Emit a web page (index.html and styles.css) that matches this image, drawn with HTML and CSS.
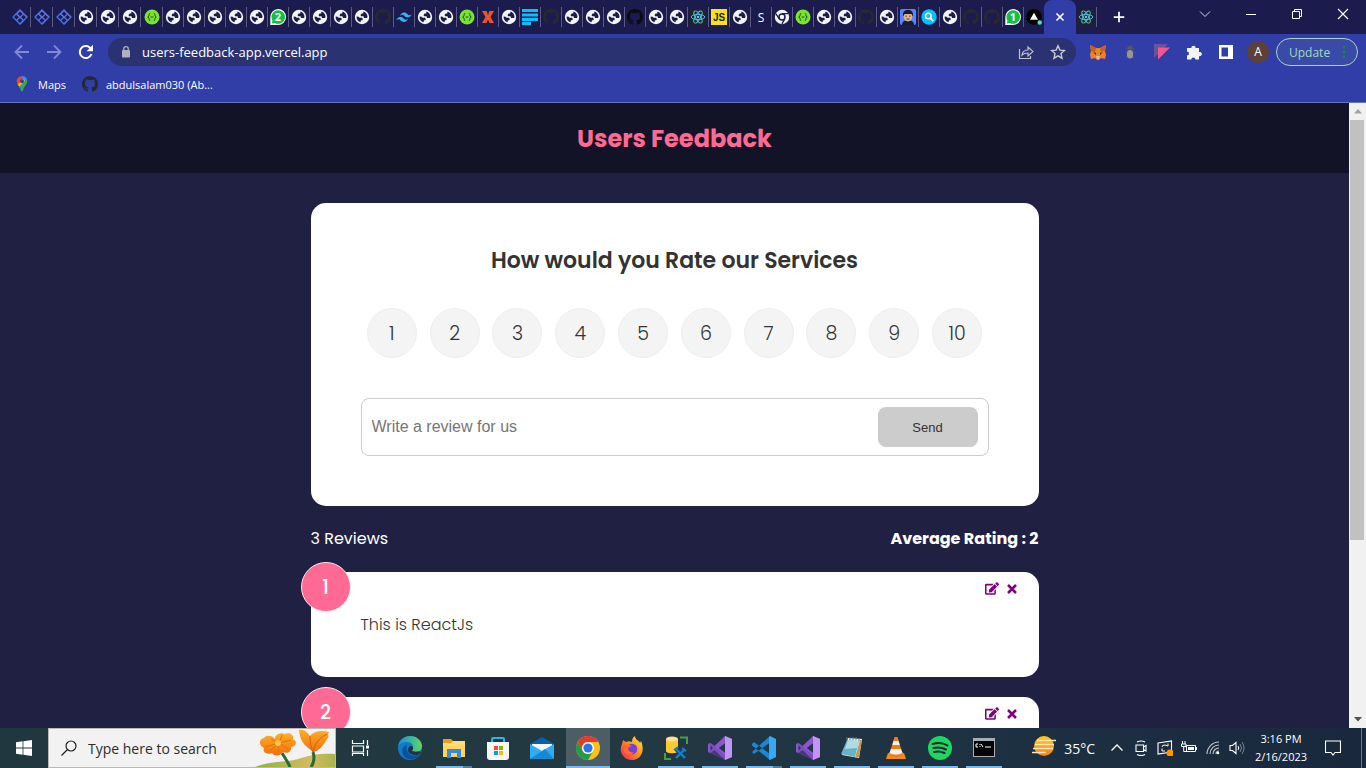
FILE: index.html
```html
<!DOCTYPE html>
<html lang="en">
<head>
<meta charset="utf-8">
<title>Users Feedback</title>
<link rel="stylesheet" href="styles.css">
</head>
<body>
<svg class="defs" aria-hidden="true">
  <symbol id="globe" viewBox="0 0 16 16"><circle cx="8" cy="8" r="7.200" fill="#f4f5f8"/><path d="M9.500 2.500c2.300.6 4 2.700 4 5.200l-.4 1.300H10L9.500 7.300H7.200L6.500 6l1.200-1.500h1.500zM2.600 7.500l2 .2 1 1h2.300l1 1.300-.6 1.300H7l-.5 2C4 12.600 2.300 10.200 2.600 7.500z" fill="#1b1b4e"/></symbol>
  <symbol id="diamond" viewBox="0 0 16 16"><g fill="none" stroke="#3f7ae8" stroke-width="1.300"><path d="M8 1l7 7-7 7-7-7z"/><path d="M4.500 4.500l7 7M8 1.500L4.500 5 8 8.500l3.500-3.500zM8 8l-3.500 3.500M11.500 5L15 8M8 15l3.500-3.500L8 8" stroke="#5b6fdc"/></g></symbol>
  <symbol id="green" viewBox="0 0 16 16"><circle cx="8" cy="8" r="7.500" fill="#7be52c"/><path d="M6.300 4.300c-1.600 0-1 1.700-1.300 2.700L3.700 8 5 9c.3 1-.3 2.700 1.300 2.700M9.700 4.300c1.600 0 1 1.700 1.300 2.700l1.300 1L11 9c-.3 1 .3 2.700-1.300 2.700M6.500 8h3" fill="none" stroke="#21502a"/></symbol>
  <symbol id="github" viewBox="0 0 16 16"><path d="M8 0C3.580 0 0 3.580 0 8c0 3.540 2.290 6.530 5.470 7.590.4.070.55-.17.55-.38 0-.19-.01-.82-.01-1.490-2.010.37-2.530-.49-2.690-.94-.09-.23-.48-.94-.82-1.130-.28-.15-.68-.52-.01-.53.63-.01 1.080.58 1.230.82.72 1.210 1.870.87 2.330.66.07-.52.28-.87.51-1.070-1.780-.2-3.640-.89-3.640-3.950 0-.87.31-1.590.82-2.150-.08-.2-.36-1.020.08-2.120 0 0 .67-.21 2.200.82a7.600 7.600 0 014 0c1.530-1.040 2.200-.82 2.200-.82.44 1.100.16 1.920.08 2.120.51.56.82 1.270.82 2.150 0 3.070-1.870 3.750-3.650 3.950.29.25.54.73.54 1.480 0 1.070-.01 1.930-.01 2.200 0 .21.15.46.55.38A8 8 0 0016 8c0-4.420-3.580-8-8-8z" fill="currentColor"/></symbol>
  <symbol id="react" viewBox="0 0 16 16"><path fill="#20232a" d="M0 0h16v16H0z"/><g fill="none" stroke="#55c8e8" stroke-width=".9"><ellipse cx="8" cy="8" rx="6.800" ry="2.600"/><ellipse cx="8" cy="8" rx="6.800" ry="2.600" transform="rotate(60 8 8)"/><ellipse cx="8" cy="8" rx="6.800" ry="2.600" transform="rotate(120 8 8)"/></g><circle cx="8" cy="8" r="1.300" fill="#55c8e8"/></symbol>
  <symbol id="tailwind" viewBox="0 0 16 16"><path d="M4 7c.6-2.300 2-3.500 4-3.500 3 0 3.400 2.300 5 2.700 1 .2 1.900-.2 2.700-1.200-.6 2.300-2 3.500-4 3.500-3 0-3.400-2.300-5-2.700C5.700 5.600 4.800 6 4 7zM.3 11.500C.9 9.200 2.300 8 4.300 8c3 0 3.400 2.300 5 2.700 1 .2 1.900-.2 2.700-1.200-.6 2.300-2 3.500-4 3.500-3 0-3.400-2.300-5-2.700-1-.2-1.900.2-2.700 1.200z" fill="#35b4f0"/></symbol>
  <symbol id="xicon" viewBox="0 0 16 16"><path d="M2 2h4.500L8 6l1.500-4H14l-3.500 6 3.500 6H9.500L8 10.500 6.500 14H2l3.500-6z" fill="#f05423"/></symbol>
  <symbol id="bars" viewBox="0 0 16 16"><path d="M0 0h16v3H0zM0 4.500h16v3H0zM0 9h16v3H0zM0 13h9v3H0z" fill="#08bffa"/></symbol>
  <symbol id="chat" viewBox="0 0 16 16"><path d="M8 0a8 8 0 110 16H.3V8A8 8 0 018 0z" fill="#fff"/><path d="M8 1.200a6.800 6.800 0 11-3.200 12.700l-3 .5.700-2.800A6.800 6.800 0 018 1.200z" fill="#12c143"/></symbol>
  <symbol id="chromemono" viewBox="0 0 16 16"><circle cx="8" cy="8" r="7.200" fill="#f4f5f8"/><circle cx="8" cy="8" r="3" fill="none" stroke="#1b1b4e" stroke-width="1.500"/><path d="M8 4.700h6M5.100 9.700L2 4.800M10.800 9.800l-2.900 5" stroke="#1b1b4e" stroke-width="1.300"/></symbol>
  <symbol id="person" viewBox="0 0 16 16"><rect width="16" height="16" rx="2" fill="#5686ff"/><path d="M2 16c0-4 3-4.500 6-4.500s6 .5 6 4.500z" fill="#141d35"/><ellipse cx="8" cy="7.500" rx="4.300" ry="5" fill="#e7b08a"/><path d="M3.300 7.500C2 2.500 5 1 8 1s6 1.500 4.700 6.500L11.500 5h-7z" fill="#181b28"/><path d="M5.500 7.200h1.400M9.200 7.200h1.400M6.500 10h3" stroke="#222" stroke-width=".8"/></symbol>
  <symbol id="magnify" viewBox="0 0 16 16"><circle cx="8" cy="8" r="7.700" fill="#08bffa"/><circle cx="7.300" cy="7" r="2.800" fill="none" stroke="#fff" stroke-width="1.500"/><path d="M9.300 9.200l3 3" stroke="#fff" stroke-width="1.700"/></symbol>
  <symbol id="vercel" viewBox="0 0 16 16"><circle cx="8" cy="8" r="7.800" fill="#000"/><path d="M8 3.800l4 7H4z" fill="#fff"/><circle cx="13.700" cy="13.500" r="2.200" fill="#50e3c2"/></symbol>
  <symbol id="edit" viewBox="0 0 576 512"><path fill="currentColor" d="M402.600 83.200l90.200 90.200c3.800 3.800 3.800 10 0 13.800L274.400 405.600l-92.800 10.300c-12.400 1.400-22.900-9.100-21.500-21.500l10.300-92.800L388.800 83.200c3.800-3.800 10-3.800 13.800 0zm162-22.900l-48.800-48.800c-15.200-15.200-39.900-15.200-55.200 0l-35.400 35.400c-3.800 3.800-3.800 10 0 13.800l90.200 90.200c3.800 3.800 10 3.800 13.800 0l35.400-35.400c15.200-15.300 15.200-40 0-55.200zM384 346.200V448H64V128h229.800c3.200 0 6.200-1.300 8.500-3.500l40-40c7.600-7.600 2.200-20.500-8.500-20.500H48C21.500 64 0 85.500 0 112v352c0 26.500 21.500 48 48 48h352c26.500 0 48-21.500 48-48V306.200c0-10.700-12.900-16-20.500-8.500l-40 40c-2.200 2.300-3.500 5.300-3.500 8.500z"/></symbol>
  <symbol id="times" viewBox="0 0 10 10"><path d="M1 1l8 8M9 1L1 9" stroke="currentColor" stroke-width="2.500" fill="none"/></symbol>
  <symbol id="vs" viewBox="0 0 24 24"><path d="M17 0l7 3v18l-7 3L6.500 14 2.500 17 0 16V8l2.500-1 4 3zM17 7.200L10.800 12l6.200 4.800zM2.500 9.300v5.400L5 12z" fill="#8a57cf" fill-rule="evenodd"/><path d="M0 8l2.500-1L17 19v5L2.500 17.500 0 16l5-4z" fill="#7643b5" opacity=".45"/><path d="M17 0l7 3v18l-7 3z" fill="#c294f6"/></symbol>
</svg>

<div class="desktop">
  <div class="browser">
    <div class="tabstrip">
      <nav class="tabs" aria-label="Open tabs">
        <button class="tab wide"><svg><use href="#diamond"/></svg></button>
        <button class="tab wide"><svg><use href="#diamond"/></svg></button>
        <button class="tab wide"><svg><use href="#diamond"/></svg></button>
        <button class="tab wide"><svg><use href="#globe"/></svg></button>
        <button class="tab wide"><svg><use href="#globe"/></svg></button>
        <button class="tab wide"><svg><use href="#globe"/></svg></button>
        <button class="tab wide"><svg><use href="#green"/></svg></button>
        <button class="tab"><svg><use href="#globe"/></svg></button>
        <button class="tab"><svg><use href="#globe"/></svg></button>
        <button class="tab"><svg><use href="#globe"/></svg></button>
        <button class="tab"><svg><use href="#globe"/></svg></button>
        <button class="tab"><svg><use href="#globe"/></svg></button>
        <button class="tab"><svg><use href="#chat"/></svg><span class="count">2</span></button>
        <button class="tab"><svg><use href="#globe"/></svg></button>
        <button class="tab"><svg><use href="#globe"/></svg></button>
        <button class="tab"><svg><use href="#globe"/></svg></button>
        <button class="tab"><svg><use href="#globe"/></svg></button>
        <button class="tab"><svg><use href="#github"/></svg></button>
        <button class="tab"><svg><use href="#tailwind"/></svg></button>
        <button class="tab"><svg><use href="#globe"/></svg></button>
        <button class="tab"><svg><use href="#globe"/></svg></button>
        <button class="tab"><svg><use href="#green"/></svg></button>
        <button class="tab"><svg><use href="#xicon"/></svg></button>
        <button class="tab"><svg><use href="#globe"/></svg></button>
        <button class="tab"><svg><use href="#bars"/></svg></button>
        <button class="tab"><svg><use href="#github"/></svg></button>
        <button class="tab"><svg><use href="#globe"/></svg></button>
        <button class="tab"><svg><use href="#globe"/></svg></button>
        <button class="tab"><svg><use href="#globe"/></svg></button>
        <button class="tab black"><svg><use href="#github"/></svg></button>
        <button class="tab"><svg><use href="#globe"/></svg></button>
        <button class="tab"><svg><use href="#globe"/></svg></button>
        <button class="tab"><svg><use href="#react"/></svg></button>
        <button class="tab"><span class="js">JS</span></button>
        <button class="tab"><svg><use href="#globe"/></svg></button>
        <button class="tab"><span class="letter">S</span></button>
        <button class="tab"><svg><use href="#chromemono"/></svg></button>
        <button class="tab"><svg><use href="#green"/></svg></button>
        <button class="tab"><svg><use href="#globe"/></svg></button>
        <button class="tab"><svg><use href="#globe"/></svg></button>
        <button class="tab"><svg><use href="#github"/></svg></button>
        <button class="tab"><svg><use href="#globe"/></svg></button>
        <button class="tab"><svg><use href="#person"/></svg></button>
        <button class="tab"><svg><use href="#magnify"/></svg></button>
        <button class="tab"><svg><use href="#globe"/></svg></button>
        <button class="tab"><svg><use href="#github"/></svg></button>
        <button class="tab"><svg><use href="#github"/></svg></button>
        <button class="tab"><svg><use href="#chat"/></svg><span class="count">1</span></button>
        <button class="tab last"><svg><use href="#vercel"/></svg></button>
        <button class="tab active" aria-label="Close tab"><svg viewBox="0 0 16 16"><path d="M4.500 4.500l7 7M11.500 4.500l-7 7" stroke="#fff" stroke-width="1.700"/></svg></button>
        <button class="tab"><svg><use href="#react"/></svg></button>
        <button class="newtab" aria-label="New tab"><svg viewBox="0 0 16 16"><path d="M8 2v12M2 8h12" stroke="#fff" stroke-width="2"/></svg></button>
      </nav>
      <div class="window-controls">
        <button aria-label="Search tabs"><svg viewBox="0 0 12 12"><path d="M1 3.500l5 5 5-5" fill="none" stroke="#d8d8ea"/></svg></button>
        <button aria-label="Minimize"><svg viewBox="0 0 12 12"><path d="M1 6.500h10" stroke="#fff"/></svg></button>
        <button aria-label="Restore"><svg viewBox="0 0 12 12"><path d="M1.500 3.500h7v7h-7zM3.500 3.500v-2h7v7h-2" fill="none" stroke="#fff"/></svg></button>
        <button aria-label="Close"><svg viewBox="0 0 12 12"><path d="M1 1l10 10M11 1L1 11" stroke="#fff" stroke-width="1.200"/></svg></button>
      </div>
    </div>

    <div class="toolbar">
      <button class="tool" aria-label="Back"><svg viewBox="0 0 16 16"><path d="M15 8H2M8 1.500L1.500 8 8 14.500" fill="none" stroke="#8389d3" stroke-width="1.800"/></svg></button>
      <button class="tool" aria-label="Forward"><svg viewBox="0 0 16 16"><path d="M1 8h13M8 1.500L14.500 8 8 14.500" fill="none" stroke="#8389d3" stroke-width="1.800"/></svg></button>
      <button class="tool" aria-label="Reload"><svg viewBox="0 0 16 16"><path d="M13.500 10A6 6 0 1112 3.700l1.500 1.500" fill="none" stroke="#fff" stroke-width="2"/><path d="M15 .8v6.400H8.600z" fill="#fff"/></svg></button>
      <div class="omnibox">
        <svg class="lock" viewBox="0 0 12 14"><rect x="2" y="5" width="8" height="7.500" rx="1" fill="#aeb1bd"/><path d="M3.700 5.500V4a2.300 2.300 0 014.600 0v1.500" fill="none" stroke="#aeb1bd" stroke-width="1.300"/></svg>
        <input type="text" aria-label="Address" value="users-feedback-app.vercel.app">
        <button class="tool" aria-label="Share"><svg viewBox="0 0 16 16"><path d="M1.500 5v9.500h11V12" fill="none" stroke="#c0c1cb" stroke-width="1.200"/><path d="M4 11c.5-3.500 2.500-5 6-5V3l5 4.500-5 4.500V9c-3 0-4.500.5-6 2z" fill="none" stroke="#c0c1cb" stroke-width="1.200"/></svg></button>
        <button class="tool" aria-label="Bookmark"><svg viewBox="0 0 16 16"><path d="M8 1.800l1.900 4.300 4.600.4L11 9.600l1 4.600-4-2.400-4 2.400 1-4.600-3.500-3.100 4.600-.4z" fill="none" stroke="#c8c9d6" stroke-width="1.400"/></svg></button>
      </div>
      <button class="tool" aria-label="MetaMask"><svg viewBox="0 0 16 16"><path d="M0 1l6 3h4l6-3-1 6 1 4-1 4-4-1-2 2H7l-2-2-4 1-1-4 1-4z" fill="#f08220"/><path d="M0 1l6 3-1 4-4-1zM16 1l-6 3 1 4 4-1z" fill="#c9601f"/><path d="M3 8l3 1v2zM13 8l-3 1v2z" fill="#24334a"/><path d="M6 12h4l-1 3H7z" fill="#d6c0b3"/></svg></button>
      <button class="tool" aria-label="Debugger"><svg viewBox="0 0 16 16"><path d="M3.500 4l2 2M12.500 4l-2 2M2.500 9h3M13.500 9h-3M3.500 14l2-2M12.500 14l-2-2" stroke="#4a4d73" stroke-width="1.300"/><path d="M5 5.500a3 4 0 016 0z" fill="#55585e"/><rect x="5" y="6" width="6" height="8.500" rx="3" fill="#969696"/></svg></button>
      <button class="tool" aria-label="Extension"><svg viewBox="0 0 16 16"><path d="M0 0h14L0 14z" fill="#69529e"/><path d="M4 3.500h12L4 15.500z" fill="#f4588a"/></svg></button>
      <button class="tool" aria-label="Extensions"><svg viewBox="0 0 16 16"><path d="M1 4h4.300a2.200 2.200 0 114.400 0H13v4a2.200 2.200 0 110 4.200V15.500H9.300a2 2 0 10-4 0H1v-4a2 2 0 100-4z" fill="#f2f3fb"/></svg></button>
      <button class="tool" aria-label="Side panel"><svg viewBox="0 0 16 16"><path d="M1 1h14v14H1zM3.500 3.500v9H10v-9z" fill="#fff" fill-rule="evenodd"/></svg></button>
      <button class="tool" aria-label="Profile"><span class="profile">A</span></button>
      <button class="update">Update<svg viewBox="0 0 4 16"><path d="M2 1a1.500 1.500 0 110 3 1.500 1.500 0 010-3zM2 6.500a1.500 1.500 0 110 3 1.500 1.500 0 010-3zM2 12a1.500 1.500 0 110 3 1.500 1.500 0 010-3z" fill="#1d8a38"/></svg></button>
    </div>

    <nav class="bookmarks" aria-label="Bookmarks">
      <a href="#maps"><svg viewBox="0 0 16 16"><path d="M8 0a5.500 5.500 0 00-4.200 2l3 3z" fill="#ea4335"/><path d="M8 0a5.500 5.500 0 015 3.300L9.500 7 6.500 4.500z" fill="#4285f4"/><path d="M3.800 2C2 4.500 2.500 7 4 9l5-5.500-2.200-2z" fill="#ea4335"/><path d="M3.700 8.600L9.900 3c2 2 0 3.500-1 4.500L5.500 11z" fill="#fbbc04"/><path d="M13 3.300c1.500 4.500-3 6.700-3.800 10.700-.5 2-1.900 2-2.400 0-.3-1-.8-2-1.600-3z" fill="#34a853"/><circle cx="8" cy="5.300" r="2" fill="#3140a8"/></svg>Maps</a>
      <a href="#github"><svg><use href="#github"/></svg>abdulsalam030 (Ab...</a>
    </nav>

    <div class="viewport">
      <div class="page">
        <header class="site-header"><h1>Users Feedback</h1></header>
        <main class="container">
          <form class="card">
            <h2>How would you Rate our Services</h2>
            <div class="rating">
              <label><input type="radio" name="rating" value="1"><span>1</span></label>
              <label><input type="radio" name="rating" value="2"><span>2</span></label>
              <label><input type="radio" name="rating" value="3"><span>3</span></label>
              <label><input type="radio" name="rating" value="4"><span>4</span></label>
              <label><input type="radio" name="rating" value="5"><span>5</span></label>
              <label><input type="radio" name="rating" value="6"><span>6</span></label>
              <label><input type="radio" name="rating" value="7"><span>7</span></label>
              <label><input type="radio" name="rating" value="8"><span>8</span></label>
              <label><input type="radio" name="rating" value="9"><span>9</span></label>
              <label><input type="radio" name="rating" value="10"><span>10</span></label>
            </div>
            <div class="input-group">
              <input type="text" placeholder="Write a review for us" aria-label="Write a review for us">
              <button class="send" type="button">Send</button>
            </div>
          </form>
          <div class="stats"><p>3 Reviews</p><p class="average">Average Rating : 2</p></div>
          <article class="card review">
            <div class="score">1</div>
            <div class="actions">
              <button aria-label="Edit review"><svg class="edit"><use href="#edit"/></svg></button>
              <button aria-label="Delete review"><svg class="times"><use href="#times"/></svg></button>
            </div>
            <p>This is ReactJs</p>
          </article>
          <article class="card review">
            <div class="score">2</div>
            <div class="actions">
              <button aria-label="Edit review"><svg class="edit"><use href="#edit"/></svg></button>
              <button aria-label="Delete review"><svg class="times"><use href="#times"/></svg></button>
            </div>
            <p>&nbsp;</p>
          </article>
        </main>
      </div>
      <div class="scrollbar">
        <button aria-label="Scroll up"><svg viewBox="0 0 8 5"><path d="M4 0l4 4.500H0z" fill="#a3a3a3"/></svg></button>
        <div class="track"><div class="thumb"></div></div>
        <button aria-label="Scroll down"><svg viewBox="0 0 8 5"><path d="M0 0h8L4 4.500z" fill="#505050"/></svg></button>
      </div>
    </div>
  </div>

  <footer class="taskbar">
    <button class="start" aria-label="Start"><svg viewBox="0 0 16 16"><path d="M0 2.200L6.600 1.300v6.200H0zM7.400 1.200L16 0v7.500H7.400zM0 8.400h6.600v6.300L0 13.800zM7.400 8.400H16V16l-8.600-1.200z" fill="#fff"/></svg></button>
    <div class="search">
      <svg class="glass" viewBox="0 0 16 16"><circle cx="10" cy="6" r="5" fill="none" stroke="#222" stroke-width="1.200"/><path d="M6.500 9.500L.5 15.500" stroke="#222" stroke-width="1.300"/></svg>
      <input type="text" placeholder="Type here to search" aria-label="Type here to search">
      <svg class="flowers" viewBox="0 0 80 38">
        <defs><linearGradient id="hill" x2="1"><stop stop-color="#8caf48"/><stop offset=".7" stop-color="#d4bb60"/><stop offset="1" stop-color="#a8b44e"/></linearGradient><linearGradient id="petal" y2="1" x2="0"><stop stop-color="#ffae24"/><stop offset="1" stop-color="#ef7010"/></linearGradient></defs>
        <path d="M0 38c18-7 34-4 46-9 12-4 22-5 34-4v13z" fill="url(#hill)"/>
        <path d="M27 24c3 5 6 9 8 14M58 23c2 6 0 12-2 15" fill="none" stroke="#286a35" stroke-width="3"/>
        <path d="M20 10c0-5 6-7 10-5 5-2 9 1 8 5 5 2 3 8-2 8 1 5-4 7-8 5-3 5-10 4-11 1-5 2-10-1-8-5-6-3-5-9 0-10 2-3 8-3 11 1z" fill="url(#petal)"/>
        <path d="M10 18l14-4 12-3M14 23l10-9 9 6M24 14l-8-4M24 14l3-8M24 14l-1 9" fill="none" stroke="#e37207"/><circle cx="23" cy="14" r="3" fill="#ffc647"/>
        <path d="M44 1c5-1 8 2 11 6 4-5 11-6 19-4-2 3 1 5-2 7-3 6-8 12-14 13-5-5-13-8-14-22z" fill="url(#petal)"/><path d="M55 7c0 6 1 12 3 16 1-7 5-13 14-18" fill="none" stroke="#d86208"/>
      </svg>
    </div>
    <div class="apps">
      <button class="app taskview" aria-label="Task view"><svg viewBox="0 0 24 24"><path d="M4.500 4v3.500h11V4M4.500 10h11v6h-11zM4.500 20v-2.500h11V20M19.500 4v5M19.500 14v6" fill="none" stroke="#fff" stroke-width="1.200"/><path d="M18 9.500h3v3h-3z" fill="#fff"/></svg></button>
      <button class="app" aria-label="Edge"><svg viewBox="0 0 24 24"><defs><linearGradient id="edge-a"><stop stop-color="#158fe0"/><stop offset="1" stop-color="#61d75b"/></linearGradient></defs><circle cx="12" cy="12" r="12" fill="#1179ca"/><path d="M0 11C1 4 6 0 12 0c7 0 12 5 12 10 0 5-5 7-10 5 3-5 0-9-5-9-4 0-8 2-9 5z" fill="url(#edge-a)"/><path d="M9 9c-2 8 4 13 13 9-5 8-14 6-17 1-2-5 0-9 4-10z" fill="#0b51a0"/><path d="M14 15c1-2 2-3 0-5-4-1-6 6-1 8 4 2 8 1 10-1 0-3-5 0-9-2z" fill="#23343e"/></svg></button>
      <button class="app open more" aria-label="File Explorer"><svg viewBox="0 0 24 24"><path d="M1 3h8l2 2h12v5H1z" fill="#e0a315"/><path d="M1 7h22v14H1z" fill="#ffd35c"/><path d="M11 5h12v5H1V7h8z" fill="#ffdc7b"/><path d="M5 13h14v9h-4v-5H9v5H5z" fill="#318de0"/></svg></button>
      <button class="app" aria-label="Store"><svg viewBox="0 0 24 24"><path d="M6 7V3q0-1 1-1h10q1 0 1 1v4" fill="none" stroke="#2bb5e9" stroke-width="2"/><path d="M1 6h22v15q0 3-3 3H4q-3 0-3-3z" fill="#f6f6f6"/><path d="M8 10h4v4H8z" fill="#ef4f22"/><path d="M13 10h4v4h-4z" fill="#7fb900"/><path d="M8 15h4v4H8z" fill="#059fe8"/><path d="M13 15h4v4h-4z" fill="#ffb901"/></svg></button>
      <button class="app" aria-label="Mail"><svg viewBox="0 0 24 24"><path d="M0 8l12-7 12 7v8H0z" fill="#0860ac"/><path d="M2 8h20v10H2z" fill="#f4f4f4"/><path d="M0 8l12 7 12-7v15H0z" fill="#30adf0"/><path d="M0 23l15-10 9 10z" fill="#1588d8"/></svg></button>
      <button class="app open current" aria-label="Chrome"><svg viewBox="0 0 24 24"><circle cx="12" cy="12" r="12" fill="#fbc116"/><path d="M1.600 6A12 12 0 0122.400 6H12a6 6 0 00-5.200 9z" fill="#e33b2e"/><path d="M1.600 6A12 12 0 0012 24l5.200-9a6 6 0 01-10.400 0z" fill="#259b48"/><circle cx="12" cy="12" r="6" fill="#fff"/><circle cx="12" cy="12" r="4.600" fill="#2876e8"/></svg></button>
      <button class="app" aria-label="Firefox"><svg viewBox="0 0 24 24"><defs><linearGradient id="fox" x1="1" y2="1" x2="0"><stop stop-color="#fff33d"/><stop offset=".45" stop-color="#ff9122"/><stop offset="1" stop-color="#f1205a"/></linearGradient></defs><path d="M3 4l3 2c2-1 4-1 6 0 0-3 1-5 3-6 0 4 4 4 5 7l1-2c5 12-2 19-9 19C4 24-2 16 2 8z" fill="url(#fox)"/><circle cx="12" cy="13" r="5.300" fill="#7142dc"/><path d="M4 8c4 0 6 1 8 2-2 1-4 1-4 3 1 3 4 4 6 3-2 4-9 3-10-2z" fill="#ff6c27"/></svg></button>
      <button class="app open" aria-label="SQL Server"><svg viewBox="0 0 24 24"><path d="M2 3v12c0 3 12 3 12 0V3z" fill="#ffc934"/><ellipse cx="8" cy="3" rx="6" ry="2.500" fill="#ffe390"/><path d="M16 1.500h7V8M1 17v6h6" fill="none" stroke="#43a047" stroke-width="2"/><path d="M12 13l9 9M21 13l-9 9" stroke="#23404a" stroke-width="4"/><path d="M12 13l9 9M20 14l-8 8M10 14l4-3M18 12l4 3" stroke="#1383cf" stroke-width="2"/></svg></button>
      <button class="app open" aria-label="Visual Studio"><svg><use href="#vs"/></svg></button>
      <button class="app open more" aria-label="VS Code"><svg viewBox="0 0 24 24"><path d="M0 8l2-2 16 12v6L0 9.500zM0 16l2 2L18 6.500V0z" fill="#1688d4"/><path d="M18 0l6 3v18l-6 3-1-1V1z" fill="#35a9f4"/></svg></button>
      <button class="app open" aria-label="Visual Studio 2019"><svg><use href="#vs"/></svg></button>
      <button class="app open" aria-label="Notepad"><svg viewBox="0 0 24 24"><path d="M8 2l14 1-3 19-17-3z" fill="#f3f4f1"/><path d="M7 4l12 1-4 16L1 18z" fill="#67b2c4"/><path d="M8 4l11 1-2 7-12 1z" fill="#b0dbe3"/><path d="M7 1v3M10 1v3M13 1v3M16 1v3M19 2v3" stroke="#65777b"/><path d="M20 4l2 0-3 17-4 1z" fill="#ba9b5b"/></svg></button>
      <button class="app open" aria-label="VLC"><svg viewBox="0 0 24 24"><path d="M4 17h16l2 6H2z" fill="#ff8a08"/><path d="M10.500 1h3L19 19c-4 3-10 3-14 0z" fill="#f27b16"/><path d="M9.500 5h5l1.300 4H8.300zM7 13h10l1.500 4c-4 2-9 2-13 0z" fill="#f1f1f1"/></svg></button>
      <button class="app open" aria-label="Spotify"><svg viewBox="0 0 24 24"><circle cx="12" cy="12" r="12" fill="#1ed760"/><path d="M4.500 8c5-1.500 11-1 15 1.500M5.500 12c4.500-1 8.500-.5 12.500 1.500M6 16c4-1 7-.5 10.500 1" fill="none" stroke="#15252d" stroke-width="2" stroke-linecap="round"/></svg></button>
      <button class="app open" aria-label="Command Prompt"><svg viewBox="0 0 24 24"><path d="M1 2h22v19H1z" fill="#a9adb1"/><path d="M2 5h20v15H2z" fill="#050505"/><path d="M6 8H4v3h2M8 8v1M8 10v1M9 8l2 3M13 11h6" fill="none" stroke="#fff"/></svg></button>
    </div>
    <div class="tray">
      <button class="weather"><svg viewBox="0 0 24 24"><defs><linearGradient id="sun" y2="1" x2="0"><stop stop-color="#ffcb13"/><stop offset="1" stop-color="#f37d21"/></linearGradient></defs><circle cx="12" cy="10" r="10" fill="url(#sun)"/><path d="M5 4.500h19M3 8.500h19M1 12.500h20M0 16.500h14" stroke="#ffe7bd" stroke-width="1.500"/></svg>35°C</button>
      <button class="tray-icon" aria-label="Hidden icons"><svg viewBox="0 0 16 16"><path d="M2.500 10.500L8 5l5.500 5.500" fill="none" stroke="#fff" stroke-width="1.300"/></svg></button>
      <button class="tray-icon" aria-label="Meet now"><svg viewBox="0 0 16 16"><path d="M3 5h7.500v6.500H3zM10.500 7L13 5.500v5.500l-2.500-1.500M4 2q4-2 8 0M4 14.500q4 2 8 0" fill="none" stroke="#fff" stroke-width="1.100"/></svg></button>
      <button class="tray-icon" aria-label="Updates"><svg viewBox="0 0 16 16"><path d="M1 3l13.500-2v11L1 14z" fill="none" stroke="#fff" stroke-width="1.100"/><path d="M5 7q0-2 3-2l3 1M11 3.500V6M5 8.500V11h3" fill="none" stroke="#fff"/><circle cx="13" cy="13" r="3.500" fill="#ff9800"/></svg></button>
      <button class="tray-icon" aria-label="Battery"><svg viewBox="0 0 16 16"><path d="M5.500 5.500h9v6h-9z" fill="none" stroke="#fff"/><path d="M7 7h6v3H7zM14.500 7H16v3h-1.500z" fill="#fff"/><path d="M1.500 1v3M4 1v3M.5 4H5v2.500H.5zM2.700 6.500v5h3" fill="none" stroke="#fff"/></svg></button>
      <button class="tray-icon" aria-label="Wi-Fi"><svg viewBox="0 0 16 16"><path d="M2 14A12 12 0 0114 2M5 14a9 9 0 019-9M8 14a6 6 0 016-6M11 14a3 3 0 013-3" fill="none" stroke="#c2cbd1" stroke-width="1.100"/><circle cx="13" cy="13" r="1.300" fill="#fff"/></svg></button>
      <button class="tray-icon" aria-label="Volume"><svg viewBox="0 0 16 16"><path d="M1 5.500h2.500L7 2.500v11l-3.500-3H1zM9 6q1.500 2 0 4" fill="none" stroke="#fff" stroke-width="1.100"/><path d="M11 4q3 4 0 8M13 2q4 6 0 12" fill="none" stroke="#78868e"/></svg></button>
      <button class="clock"><span>3:16 PM</span><span>2/16/2023</span></button>
      <button class="notify" aria-label="Notifications"><svg viewBox="0 0 16 16"><path d="M.5 1h15v11.500H10L8 15l-2-2.500H.5z" fill="none" stroke="#fff" stroke-width="1.100"/></svg></button>
      <button class="show-desktop" aria-label="Show desktop"></button>
    </div>
  </footer>
</div>
</body>
</html>
```
FILE: styles.css
```css
* { box-sizing: border-box; margin: 0; padding: 0; }

body { font-family: "Open Sans", "Noto Sans", sans-serif; }

button { border: 0; background: none; color: inherit; font: inherit; cursor: pointer; }

input { border: 0; outline: 0; background: none; color: inherit; font: inherit; min-width: 0; }

svg { display: block; flex: none; width: 16px; height: 16px; }

.defs { position: absolute; width: 0; height: 0; }

.desktop { display: flex; flex-direction: column; height: 100vh; overflow: hidden; }

.browser { display: flex; flex: 1; flex-direction: column; min-height: 0; background: #313ea8; color: #fff; }

/* Tab strip */
.tabstrip { display: flex; justify-content: space-between; height: 34px; background: #1b1b4e; }

.tabs { display: flex; min-width: 0; padding-left: 9px; overflow: hidden; }

.tab { position: relative; display: flex; flex: none; align-items: center; justify-content: center; width: 21px; padding-right: 1px; color: #242932; }

.tab::after { content: ""; position: absolute; top: 7px; right: 0; width: 1px; height: 20px; background: #5b5b82; }

.tab.wide { width: 22px; padding-right: 0; }

.tab.last { width: 20px; padding-right: 0; }

.tab.last::after, .tab.active::after { display: none; }

.tab.black { color: #0b0b12; }

.tab.active { width: 32px; padding-right: 0; border-radius: 8px 8px 0 0; background: #313ea8; }

.tab .count { position: absolute; inset: 0 1px 0 0; color: #fff; font-size: 11px; font-weight: 700; line-height: 34px; text-align: center; }

.js { width: 16px; height: 16px; background: #f7df1e; color: #222; font-family: "Liberation Sans", sans-serif; font-size: 10px; font-weight: 700; line-height: 18px; }

.letter { color: #fff; font-size: 12px; }

.newtab { flex: none; display: grid; place-items: center; width: 44px; }

.newtab svg { width: 14px; height: 14px; }

.window-controls { display: flex; height: 28px; }

.window-controls button { display: grid; place-items: center; width: 46px; }

.window-controls svg { width: 12px; height: 12px; }

/* Toolbar */
.toolbar { display: flex; align-items: center; height: 36px; padding: 0 8px 0 6px; }

.tool { display: grid; flex: none; place-items: center; width: 32px; height: 28px; }

.omnibox { display: flex; flex: 1; align-items: center; min-width: 0; height: 28px; margin: 0 6px; padding-left: 12px; padding-right: 2px; border-radius: 14px; background: #2b3272; }

.omnibox input { flex: 1; padding-left: 10px; font-size: 13px; }

.lock { width: 12px; height: 14px; }

.profile { width: 22px; height: 22px; border-radius: 50%; background: #5d4037; font-size: 12px; line-height: 22px; text-align: center; }

.update { display: flex; flex: none; align-items: center; justify-content: space-between; width: 82px; height: 28px; margin-left: 2px; padding: 0 11px 0 12px; border: 1px solid #a5d8bd; border-radius: 14px; background: #3a4ba7; color: #a1d9b8; font-size: 12px; }

.update svg { width: 4px; height: 14px; }

.bookmarks { display: flex; gap: 16px; height: 33px; padding: 0 14px; border-bottom: 1px solid #6671c0; }

.bookmarks a { display: flex; gap: 8px; align-items: center; height: 28px; color: #fff; font-size: 11px; text-decoration: none; }

.bookmarks a:last-child svg { color: #24292f; }

/* Page */
.viewport { display: flex; flex: 1; min-height: 0; }

.page { flex: 1; overflow: hidden; background: #202142; font-family: Poppins, Inter, sans-serif; }

.site-header { display: flex; align-items: center; justify-content: center; height: 70px; background: #121326; color: #ff6a95; }

h1 { font-size: 24px; font-weight: 700; }

.container { max-width: 768px; margin: 0 auto; padding: 0 20px; }

.card { position: relative; margin-top: 30px; padding: 40px 50px 50px; border-radius: 15px; background: #fff; color: #333; }

h2 { font-size: 22px; font-weight: 600; line-height: 35px; text-align: center; }

.rating { display: flex; justify-content: space-around; margin: 30px 0 40px; }

.rating input { position: absolute; opacity: 0; }

.rating span { display: block; width: 50px; height: 50px; border: 1px solid #eee; border-radius: 50%; background: #f4f4f4; font-size: 19px; font-weight: 300; line-height: 50px; text-align: center; }

.input-group { display: flex; padding: 8px 10px; border: 1px solid #ccc; border-radius: 8px; }

.input-group input { flex: 1; font-family: "Liberation Sans", sans-serif; font-size: 16px; }

.input-group input::placeholder { color: #757575; opacity: 1; }

.send { width: 100px; height: 40px; border-radius: 8px; background: #ccc; color: #333; font-family: "Liberation Sans", sans-serif; font-size: 13px; }

.stats { display: flex; justify-content: space-between; padding: 20px 0; font-size: 16px; line-height: 26px; }

.average { font-weight: 700; }

.card.review { margin: 0 0 20px; padding: 40px 50px; font-size: 16px; font-weight: 300; line-height: 25px; }

.score { position: absolute; top: -10px; left: -10px; width: 50px; height: 50px; border: 1px solid #eee; border-radius: 50%; background: #ff6a95; color: #fff; font-size: 19px; font-weight: 500; line-height: 50px; text-align: center; }

.actions { position: absolute; top: 10px; right: 22px; display: flex; gap: 8px; align-items: center; color: #800080; }

.actions .edit { width: 14px; height: 13px; }

.actions .times { width: 10px; height: 10px; }

/* Scrollbar */
.scrollbar { display: flex; flex: none; flex-direction: column; width: 17px; background: #f1f1f1; }

.scrollbar button { display: grid; place-items: center; height: 17px; }

.scrollbar svg { width: 8px; height: 5px; }

.track { flex: 1; }

.thumb { height: 71%; margin: 0 2px 0 1px; background: #c1c1c1; }

/* Taskbar */
.taskbar { display: flex; height: 40px; background: linear-gradient(90deg, #203740, #233942 45%, #1d3042 75%, #19283d); color: #fff; }

.start { display: grid; flex: none; place-items: center; width: 48px; }

.search { display: flex; flex: none; align-items: center; width: 288px; padding-left: 12px; border: 1px solid #b8b8b4; background: #f2f2f2; color: #2d2d2d; }

.search input { flex: 1; padding-left: 11px; font-size: 14px; }

.search input::placeholder { color: #2d2d2d; opacity: 1; }

.flowers { width: 80px; height: 38px; }

.apps { display: flex; flex: 1; min-width: 0; overflow: hidden; }

.app { position: relative; display: grid; flex: none; place-items: center; width: 44px; }

.app.taskview { width: 48px; margin-right: 4px; }

.app svg { width: 24px; height: 24px; }

.app.open::after { content: ""; position: absolute; right: 4px; bottom: 0; left: 4px; height: 2px; background: #76b9ed; }

.app.more::after { background: linear-gradient(90deg, #76b9ed 75%, #537f9e 75%); }

.app.current { margin-left: 2px; background: #4c5d66; }

.app.current::after { right: 0; left: 0; }

.tray { display: flex; flex: none; align-items: center; }

.weather { display: flex; gap: 8px; align-items: center; margin-right: 10px; font-size: 14px; }

.weather svg { width: 24px; height: 24px; }

.tray-icon { display: grid; place-items: center; width: 24px; height: 40px; }

.clock { display: flex; flex-direction: column; align-items: center; width: 64px; font-size: 11px; line-height: 18px; }

.notify { display: grid; place-items: center; width: 40px; height: 40px; }

.show-desktop { align-self: stretch; width: 5px; margin-left: 8px; border-left: 1px solid #657481; }
```
